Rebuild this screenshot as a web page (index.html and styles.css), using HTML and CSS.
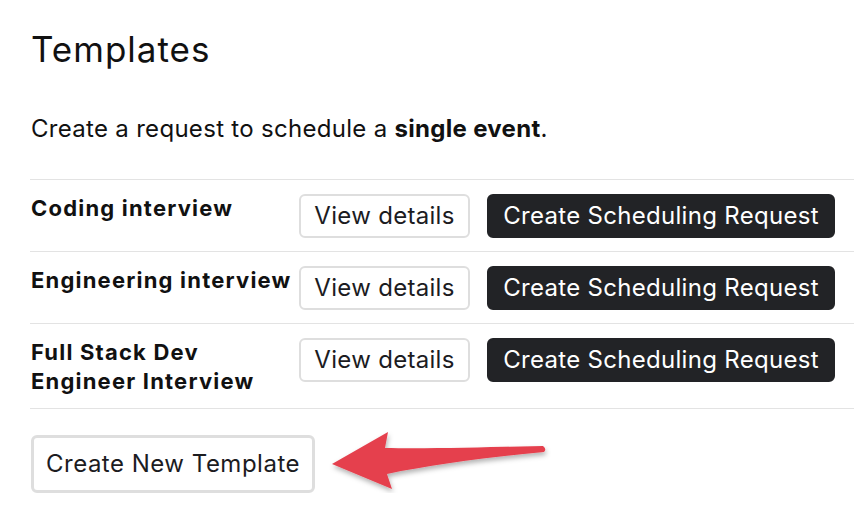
FILE: index.html
```html
<!DOCTYPE html>
<html lang="en">
<head>
<meta charset="utf-8">
<title>Templates</title>
<link rel="stylesheet" href="styles.css">
</head>
<body>
<main class="page">
  <h1 class="title">Templates</h1>
  <p class="intro">Create a request to schedule a <strong>single event</strong>.</p>
  <ul class="template-list">
    <li class="template-row">
      <div class="template-name">Coding interview</div>
      <button class="btn btn-outline">View details</button>
      <button class="btn btn-dark">Create Scheduling Request</button>
    </li>
    <li class="template-row">
      <div class="template-name">Engineering interview</div>
      <button class="btn btn-outline">View details</button>
      <button class="btn btn-dark">Create Scheduling Request</button>
    </li>
    <li class="template-row">
      <div class="template-name">Full Stack Dev Engineer Interview</div>
      <button class="btn btn-outline">View details</button>
      <button class="btn btn-dark">Create Scheduling Request</button>
    </li>
  </ul>
  <div class="footer-row">
    <button class="btn btn-outline btn-large">Create New Template</button>
    <svg class="arrow" width="240" height="58" viewBox="0 0 240 58" aria-hidden="true">
      <defs>
        <filter id="shadow" filterUnits="userSpaceOnUse" x="0" y="-20" width="240" height="100">
          <feDropShadow dx="1" dy="3" stdDeviation="2.5" flood-color="#000" flood-opacity="0.3"/>
        </filter>
      </defs>
      <path filter="url(#shadow)" fill="#e5404e" d="M12 29 L68 -3 L65 13 C110 14 170 12 223 11 Q227 14 224 17 C170 22 110 30 67 39 L72 54 Z"/>
    </svg>
  </div>
</main>
</body>
</html>
```
FILE: styles.css
```css
html, body {
  margin: 0;
  padding: 0;
  background: #ffffff;
}
body {
  font-family: Inter, "Open Sans", "Liberation Sans", sans-serif;
  color: #111111;
}
.page {
  padding: 26px 0 0 31px;
}
.title {
  margin: 0;
  font-size: 35px;
  line-height: 46px;
  font-weight: 400;
  letter-spacing: 1px;
}
.intro {
  margin: 42px 0 0;
  font-size: 24px;
  line-height: 30px;
  letter-spacing: 0.3px;
}
.intro strong {
  font-weight: 700;
}
.template-list {
  list-style: none;
  margin: 35px 0 0 -1px;
  padding: 0;
  border-bottom: 1px solid #e3e3e3;
}
.template-row {
  display: flex;
  align-items: flex-start;
  padding: 14px 19px 13px 1px;
  border-top: 1px solid #e3e3e3;
}
.template-name {
  flex: 0 0 268px;
  font-size: 22px;
  font-weight: 700;
  line-height: 29px;
  letter-spacing: 1.2px;
  margin-bottom: -1px;
}
.btn {
  font-family: inherit;
  font-size: 24px;
  line-height: 28px;
  letter-spacing: 0.3px;
  border-radius: 6px;
  cursor: pointer;
}
.btn-outline {
  background: #ffffff;
  color: #1c1c1f;
  border: 2px solid #dedede;
  padding: 6px 0;
  width: 171px;
}
.btn-dark {
  margin-left: 17px;
  background: #222326;
  color: #ffffff;
  border: 2px solid #222326;
  padding: 6px 0;
  width: 348px;
}
.footer-row {
  display: flex;
  align-items: flex-start;
  margin-top: 26px;
}
.btn-large {
  width: 284px;
  height: 58px;
  border-width: 3px;
  padding: 0;
  letter-spacing: 0.5px;
}
.arrow {
  display: block;
  margin-left: 5px;
  overflow: visible;
}
```
